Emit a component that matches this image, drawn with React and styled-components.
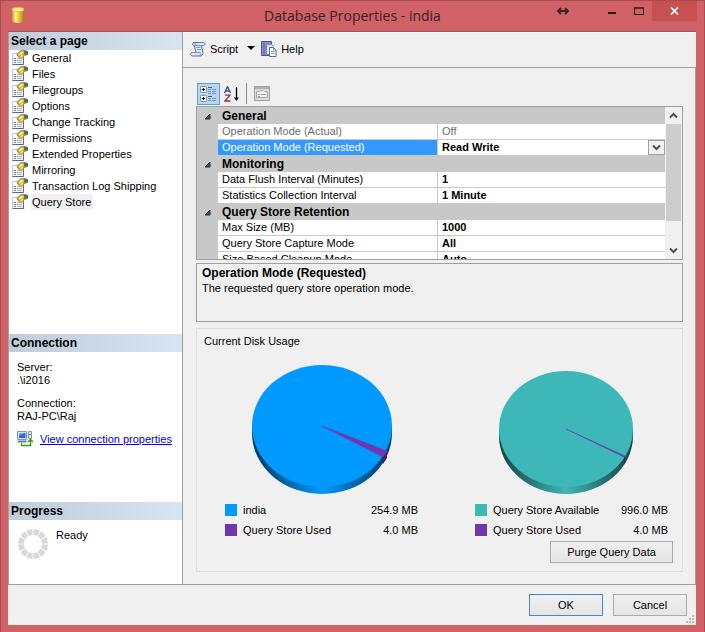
import React, { useState } from "react";
import styled, { createGlobalStyle } from "styled-components";

const GlobalStyle = createGlobalStyle`
    * {
        box-sizing: border-box;
    }

    body {
        margin: 0;
        background-color: #fff;
        color: #000;
        font: 11px/14px "Liberation Sans", Arial, sans-serif;
    }

    button, select {
        font: inherit;
        color: inherit;
    }

    svg {
        display: block;
        flex: none;
    }
`;

const Window = styled.div`
    display: flex;
    flex-direction: column;
    min-height: 100vh;
    padding: 0 8px 7px 7px;
    background-color: #cf6167;
    border: 1px solid #a94c51;
`;

const TitleBar = styled.header`
    display: grid;
    grid-template-columns: 1fr auto 1fr;
    height: 30px;
    margin-right: -1px;
`;

const AppIcon = styled.div`
    padding: 5px 3px;
`;

const Title = styled.h1`
    margin: 0;
    font: 14px/30px "Open Sans", "Noto Sans", sans-serif;
    color: #3b2022;
`;

const WindowControls = styled.div`
    display: flex;
    justify-content: flex-end;
    align-items: flex-start;
`;

const WindowButton = styled.button`
    display: flex;
    justify-content: center;
    align-items: center;
    width: ${(props) => (props.$close ? "45px" : "27px")};
    height: 20px;
    padding: 0;
    margin-right: ${(props) => (props.$apart ? "22px" : "0")};
    border: none;
    background-color: ${(props) => (props.$close ? "#c75050" : "transparent")};
`;

const Body = styled.div`
    position: relative;
    display: flex;
    flex-direction: column;
    flex: 1;
    background-color: #f0f0f0;
    border: solid #a5555a;
    border-width: 1px 0 0;
`;

const Panes = styled.div`
    display: flex;
    flex: 1;
    border-bottom: 1px solid #a0a0a0;
`;

const Sidebar = styled.aside`
    display: flex;
    flex-direction: column;
    width: 175px;
    flex: none;
    background-color: #fff;
    border: solid #a0a0a0;
    border-width: 0 1px;
`;

const SideTitle = styled.h2`
    margin: 0;
    padding: 0 2px;
    font-size: 12px;
    line-height: 18px;
    background: linear-gradient(to right, #bfcddb, #d7e4f2);
`;

const PageSection = styled.nav`
    flex: 1;
`;

const PageList = styled.ul`
    margin: 0;
    padding: 0 3px;
    list-style: none;
`;

const PageButton = styled.button`
    display: flex;
    align-items: center;
    gap: 3px;
    height: 16px;
    padding: 0;
    border: none;
    background: none;

    span {
        padding: 0 2px 0 1px;
        line-height: 16px;
        background-color: ${(props) => (props.$selected ? "#f0f0f0" : "transparent")};
    }
`;

const ConnectionInfo = styled.div`
    height: 150px;
    padding: 9px 8px;
    line-height: 13px;
`;

const Info = styled.dl`
    margin: 0 0 10px;

    dd {
        margin: 0;
    }
`;

const ConnectionLink = styled.a`
    display: flex;
    align-items: center;
    gap: 7px;
    margin-top: -2px;
    color: #0000e0;
`;

const ProgressInfo = styled.div`
    display: flex;
    gap: 7px;
    height: 64px;
    padding: 8px;
`;

const Main = styled.main`
    display: flex;
    flex-direction: column;
    flex: 1;
    min-width: 0;
    border-top: 1px solid #fff;
`;

const Toolbar = styled.div`
    display: flex;
    align-items: center;
    height: 34px;
    padding: 0 7px 3px;
`;

const ToolButton = styled.button`
    display: flex;
    align-items: center;
    gap: 4px;
    padding: 0;
    margin-right: ${(props) => (props.$menu ? "6px" : "0")};
    border: none;
    background: none;

    span {
        margin-right: ${(props) => (props.$menu ? "5px" : "0")};
    }
`;

const Content = styled.div`
    display: flex;
    flex-direction: column;
    flex: 1;
    padding: 13px 12px 12px 13px;
    border: solid #a0a0a0;
    border-width: 1px 1px 0 0;
`;

const GridTools = styled.div`
    display: flex;
    align-items: center;
    height: 25px;
    padding-left: 1px;
`;

const GridTool = styled.button`
    display: flex;
    align-items: center;
    justify-content: center;
    width: 23px;
    height: 22px;
    padding: 0;
    border: 1px solid ${(props) => (props.$active ? "#5c9fdc" : "transparent")};
    background-color: ${(props) => (props.$active ? "#b5d7f5" : "transparent")};
`;

const Separator = styled.span`
    width: 1px;
    height: 21px;
    margin: 0 3px;
    background-color: #8c8c8c;
`;

const PropertyBox = styled.div`
    display: flex;
    height: 154px;
    border: 1px solid #a0a0a0;
    overflow: hidden;
`;

const TableArea = styled.div`
    flex: 1;
    height: 152px;
    padding-top: 1px;
    overflow: hidden;
    background-color: #c8c8c8;
`;

const Table = styled.table`
    width: 100%;
    table-layout: fixed;
    border-collapse: separate;
    border-spacing: 0;
`;

const Gutter = styled.td`
    padding: 0 0 0 7px;
    background-color: #c8c8c8;
`;

const Category = styled.th`
    height: 16px;
    padding: 0 4px;
    font-size: 12px;
    line-height: 16px;
    text-align: left;
`;

const Name = styled.th`
    height: 16px;
    padding: 0 4px;
    font-weight: normal;
    line-height: 15px;
    text-align: left;
    color: ${(props) => (props.$selected ? "#fff" : props.$disabled ? "#6d6d6d" : "#000")};
    background-color: ${(props) => (props.$selected ? "#3399ff" : "#fff")};
    border: solid #c8c8c8;
    border-width: 0 1px 1px 0;
`;

const Value = styled.td`
    position: relative;
    height: 16px;
    padding: 0 4px;
    font-weight: ${(props) => (props.$disabled ? "normal" : "bold")};
    line-height: 15px;
    color: ${(props) => (props.$disabled ? "#6d6d6d" : "#000")};
    background-color: #fff;
    border-bottom: 1px solid #c8c8c8;
`;

const Select = styled.select`
    display: block;
    width: 100%;
    height: 15px;
    padding: 0;
    border: none;
    outline: none;
    appearance: none;
    background: none;
`;

const SelectArrow = styled.span`
    position: absolute;
    top: 0;
    right: 0;
    display: flex;
    align-items: center;
    justify-content: center;
    width: 17px;
    height: 15px;
    border: 1px solid #a0a0a0;
    background-color: #f0f0f0;
    pointer-events: none;
`;

const Scrollbar = styled.div`
    display: flex;
    flex-direction: column;
    width: 17px;
    padding: 0 1px;
    background-color: #f0f0f0;
`;

const ScrollButton = styled.button`
    display: flex;
    align-items: center;
    justify-content: center;
    height: 17px;
    padding: 0;
    border: none;
    background: none;
`;

const ScrollTrack = styled.div`
    flex: 1;
`;

const ScrollThumb = styled.div`
    height: 82%;
    background-color: #cdcdcd;
`;

const Description = styled.section`
    height: 59px;
    margin: 3px 0 6px;
    padding: 2px 5px;
    border: 1px solid #a0a0a0;

    h3 {
        margin: 0;
        font-size: 12px;
        line-height: 15px;
    }

    p {
        margin: 0;
        line-height: 15px;
    }
`;

const UsageBox = styled.section`
    display: flex;
    flex-direction: column;
    flex: 1;
    padding-bottom: 8px;
    border: 1px solid #dcdcdc;

    h3 {
        margin: 5px 7px 0;
        font-size: 11px;
        font-weight: normal;
    }
`;

const Charts = styled.div`
    display: grid;
    grid-template-columns: 1fr 1fr;
    gap: 57px;
    flex: 1;
    padding: 0 14px 0 28px;
`;

const Chart = styled.div`
    display: flex;
    flex-direction: column;
    justify-content: space-between;
`;

const Legend = styled.ul`
    margin: 0;
    padding: 0;
    list-style: none;
`;

const LegendRow = styled.li`
    display: flex;
    align-items: center;
    gap: 6px;
    height: 20px;

    b {
        margin-left: auto;
        font-weight: normal;
    }
`;

const Swatch = styled.span`
    width: 12px;
    height: 12px;
    background-color: ${(props) => props.$color};
`;

const Button = styled.button`
    width: ${(props) => (props.$wide ? "123px" : "74px")};
    height: 22px;
    padding: 0;
    border: 1px solid ${(props) => (props.$primary ? "#3c8cdc" : "#acacac")};
    background: linear-gradient(#f0f0f0, #e5e5e5);
`;

const PurgeRow = styled.div`
    display: flex;
    justify-content: flex-end;
    padding: 1px 9px 0;
`;

const Footer = styled.footer`
    display: flex;
    justify-content: flex-end;
    gap: 10px;
    padding: 9px;
`;

const Grip = styled.div`
    position: absolute;
    right: 2px;
    bottom: 2px;
`;

const pages = [
    "General",
    "Files",
    "Filegroups",
    "Options",
    "Change Tracking",
    "Permissions",
    "Extended Properties",
    "Mirroring",
    "Transaction Log Shipping",
    "Query Store",
];

const properties = [
    { category: "General" },
    { name: "Operation Mode (Actual)", value: "Off", disabled: true },
    { name: "Operation Mode (Requested)", value: "Read Write", options: ["Off", "Read Only", "Read Write"] },
    { category: "Monitoring" },
    { name: "Data Flush Interval (Minutes)", value: "1" },
    { name: "Statistics Collection Interval", value: "1 Minute" },
    { category: "Query Store Retention" },
    { name: "Max Size (MB)", value: "1000" },
    { name: "Query Store Capture Mode", value: "All" },
    { name: "Size Based Cleanup Mode", value: "Auto" },
];

const charts = [
    {
        id: "database",
        cx: 97, cy: 78, rx: 70, ry: 61,
        color: "#0099ff", dark: "#003a66", mid: "#0065a8",
        slice: [[65, 25], [61, 31]],
        items: [["india", "254.9 MB", "#0099ff"], ["Query Store Used", "4.0 MB", "#7037ad"]],
    },
    {
        id: "store",
        cx: 91, cy: 81, rx: 67, ry: 58,
        color: "#3eb7b8", dark: "#174545", mid: "#297a7a",
        slice: [[59, 27], [58, 28]],
        items: [["Query Store Available", "996.0 MB", "#3eb7b8"], ["Query Store Used", "4.0 MB", "#7037ad"]],
    },
];

const DatabaseIcon = () => (
    <svg width="14" height="18" viewBox="0 0 14 18">
        <defs>
            <linearGradient id="gold">
                <stop offset="0" stopColor="#c79a1c" />
                <stop offset=".3" stopColor="#fff3a0" />
                <stop offset=".6" stopColor="#eec52e" />
                <stop offset="1" stopColor="#a87810" />
            </linearGradient>
        </defs>
        <path d="M1 3.5v11c0 3.3 12 3.3 12 0v-11z" fill="url(#gold)" />
        <ellipse cx="7" cy="3.5" rx="6" ry="2.3" fill="#fbeb9a" stroke="#d5a72a" strokeWidth=".7" />
    </svg>
);

const PageIcon = () => (
    <svg width="16" height="16" viewBox="0 0 16 16">
        <path d="M.5 3.5h11v11H.5z" fill="#fff" stroke="#c3c6d2" />
        <path d="M11.5 8v6.5H.5" fill="none" stroke="#5b6385" />
        <path d="M2 8.5h2M2 10.5h2M2 12.5h2" stroke="#5b78c8" />
        <path d="M5 8.5h3M5 10.5h5M5 12.5h5" stroke="#a5afd8" />
        <path d="M5 4.5L8 1l3-.5h2l2.5 1v3L12 5.500 11.500 7 9.500 9 8 7.500 6 6.500z" fill="#d9ad35" stroke="#7b6425" strokeWidth=".7" />
        <path d="M6.500 4.500L9 1.800l3 .2-3 3z" fill="#fff09a" />
        <path d="M8 6.500l2-2 1 1L9.500 8z" fill="#f3dc6c" />
        <path d="M12.500.5l3.500.7v3l-3 .8-1-1.500z" fill="#46734b" />
    </svg>
);

const ServerIcon = () => (
    <svg width="16" height="16" viewBox="0 0 16 16">
        <path d="M.5.500h9v8h-9z" fill="#d9e4f4" stroke="#8195b8" />
        <path d="M2 2h6.500v5H2z" fill="#2469d8" />
        <path d="M2 2h6L2 5z" fill="#65a7f3" />
        <path d="M1 10.500h8.500" stroke="#6a7890" strokeWidth="2" />
        <path d="M11.500.5h3v7h-3z" fill="#e9edf2" stroke="#8994a8" />
        <path d="M12 3.500h2" stroke="#6d7890" />
        <path d="M4.500 12v2.500h9V9M11 11l2.500-2.500L16 11" fill="none" stroke="#339b1e" strokeWidth="1.300" />
    </svg>
);

const ScriptIcon = () => (
    <svg width="16" height="16" viewBox="0 0 16 16">
        <path d="M4 1.500h9.500c2 0 2 3 0 3h-2l1.500 8-1.500 2.500H2c-2-1-1.500-3.500.5-3.500h3.500L4.500 5C2 4.500 2 2 4 1.500z" fill="#dbe6f6" stroke="#5d7299" />
        <path d="M4 1.800c2 .3 1.500 2.700 0 2.700h8M2.500 11.500h7.500c1.500 1 .5 3-1 3.500M6.500 6.500h4M7 8.500h4" fill="none" stroke="#7d92b8" />
    </svg>
);

const HelpIcon = () => (
    <svg width="16" height="16" viewBox="0 0 16 16">
        <path d="M.5.500h10v14H.5z" fill="#8b93c9" stroke="#4c5590" />
        <path d="M3 1v13" stroke="#555f9e" />
        <path d="M5.500 3.500h5l2 2v8h-7z" fill="#dce7f6" stroke="#7185ac" />
        <path d="M8.500 6.500h4l2.500 2.500v6.500H8.500z" fill="#fff" stroke="#526b98" />
        <path d="M12.500 6.500V9H15M10 10.500h3.500M10 12.500h3.500" fill="none" stroke="#7c94be" />
    </svg>
);

const CategorizedIcon = () => (
    <svg width="17" height="16" viewBox="0 0 17 16">
        <rect x=".5" y=".5" width="6" height="6" rx="1" fill="#fff" stroke="#7f8ba0" />
        <rect x=".5" y="9.500" width="6" height="6" rx="1" fill="#fff" stroke="#7f8ba0" />
        <path d="M2 3.500h3M3.500 2v3M2 12.500h3M3.500 11v3" stroke="#000" />
        <path d="M8 1.500h4M8 10.500h4" stroke="#35598f" />
        <path d="M8 3.500h3m1 0h4M8 5.500h3m1 0h4M8 7.500h3m1 0h4M8 12.500h3m1 0h4M8 14.500h3m1 0h4" stroke="#8592aa" />
    </svg>
);

const SortIcon = () => (
    <svg width="16" height="16" viewBox="0 0 16 16">
        <path d="M.5 7L3.500.500 6.500 7M1.500 5h4" fill="none" stroke="#3350a0" strokeWidth="1.300" />
        <path d="M1 9.200h5L1 15h5.500" fill="none" stroke="#a02c36" strokeWidth="1.300" />
        <path d="M12.500 1v12" stroke="#000" strokeWidth="1.300" />
        <path d="M10 11.500h5L12.500 15z" />
    </svg>
);

const PropertyPagesIcon = () => (
    <svg width="16" height="15" viewBox="0 0 16 15">
        <path d="M.5.500h15v14H.5z" fill="#dcdcdc" stroke="#a0a0a0" />
        <path d="M1 2h14" stroke="#b0b0b0" strokeWidth="2" />
        <path d="M2.500 5.500h3l1-1h3l1 1h3v6h-11z" fill="#eee" stroke="#a8a8a8" />
        <path d="M4 8.500h2M7 8.500h5M4 10.500h2" stroke="#a0a0a0" />
    </svg>
);

const Chevron = ({ up }) => (
    <svg width="9" height="7" viewBox="0 0 9 7">
        <path d={up ? "M1 5.500l3.500-3.500L8 5.500" : "M1 1.500L4.500 5 8 1.500"} fill="none" stroke="#505050" strokeWidth="2" />
    </svg>
);

const Spinner = () => (
    <svg width="32" height="32" viewBox="0 0 32 32">
        <circle cx="16" cy="16" r="12" fill="none" stroke="#d9d9d9" strokeWidth="6" pathLength="120" strokeDasharray="8.600 1.400" strokeDashoffset="-.7" />
    </svg>
);

const Pie = ({ id, cx, cy, rx, ry, color, dark, mid, slice }) => {
    const [a, b] = slice;
    const depth = 7;

    return (
        <svg width="100%" height="152" viewBox="0 0 193 152">
            <defs>
                <linearGradient id={id}>
                    <stop offset="0" stopColor={dark} />
                    <stop offset=".25" stopColor={mid} />
                    <stop offset=".5" stopColor={color} />
                    <stop offset=".75" stopColor={mid} />
                    <stop offset="1" stopColor={dark} />
                </linearGradient>
            </defs>
            <path
                d={`M${cx - rx} ${cy}v${depth}a${rx} ${ry} 0 0 0 ${rx * 2} 0v${-depth}z`}
                fill={`url(#${id})`}
            />
            <path d={`M${cx + a[0]} ${cy + a[1]}L${cx + b[0]} ${cy + b[1]}v${depth}l${a[0] - b[0]} ${a[1] - b[1]}z`} fill="#3d1f66" />
            <ellipse cx={cx} cy={cy} rx={rx} ry={ry} fill={color} />
            <path d={`M${cx} ${cy}l${a[0]} ${a[1]}L${cx + b[0]} ${cy + b[1]}z`} fill="#7037ad" stroke="#7037ad" strokeWidth=".5" />
        </svg>
    );
};

const PropertyRow = ({ item }) => {
    const [value, setValue] = useState(item.value);

    if (item.category) {
        return (
            <tr>
                <Gutter>
                    <svg width="7" height="7" viewBox="0 0 7 7">
                        <path d="M6 1v5H1z" fill="#555" stroke="#222" />
                    </svg>
                </Gutter>
                <Category colSpan="2">{item.category}</Category>
            </tr>
        );
    }

    return (
        <tr>
            <Gutter />
            <Name scope="row" $selected={!!item.options} $disabled={item.disabled}>{item.name}</Name>
            <Value $disabled={item.disabled}>
                {item.options ? (
                    <>
                        <Select aria-label={item.name} value={value} onChange={(e) => setValue(e.target.value)}>
                            {item.options.map((option) => (
                                <option key={option}>{option}</option>
                            ))}
                        </Select>
                        <SelectArrow><Chevron /></SelectArrow>
                    </>
                ) : value}
            </Value>
        </tr>
    );
};

const App = () => {
    const [page, setPage] = useState("Query Store");

    return (
        <>
            <GlobalStyle />
            <Window>
                <TitleBar>
                    <AppIcon><DatabaseIcon /></AppIcon>
                    <Title>Database Properties - india</Title>
                    <WindowControls>
                        <WindowButton $apart aria-label="Resize">
                            <svg width="12" height="8" viewBox="0 0 12 8">
                                <path d="M2 4h8M4 1L1 4l3 3M8 1l3 3-3 3" fill="none" stroke="#3b2022" strokeWidth="1.800" />
                            </svg>
                        </WindowButton>
                        <WindowButton aria-label="Minimize">
                            <svg width="10" height="8" viewBox="0 0 10 8"><path d="M1 6h8" stroke="#2b1618" strokeWidth="2" /></svg>
                        </WindowButton>
                        <WindowButton aria-label="Maximize">
                            <svg width="10" height="8" viewBox="0 0 10 8"><path d="M.5 1h9v6.500h-9zM0 1h10" fill="none" stroke="#2b1618" /></svg>
                        </WindowButton>
                        <WindowButton $close aria-label="Close">
                            <svg width="9" height="8" viewBox="0 0 9 8"><path d="M1 .500l7 7M8 .500l-7 7" stroke="#fff" strokeWidth="1.700" /></svg>
                        </WindowButton>
                    </WindowControls>
                </TitleBar>

                <Body>
                    <Panes>
                        <Sidebar>
                            <PageSection>
                                <SideTitle>Select a page</SideTitle>
                                <PageList>
                                    {pages.map((item) => (
                                        <li key={item}>
                                            <PageButton $selected={item === page} onClick={() => setPage(item)}>
                                                <PageIcon />
                                                <span>{item}</span>
                                            </PageButton>
                                        </li>
                                    ))}
                                </PageList>
                            </PageSection>

                            <SideTitle>Connection</SideTitle>
                            <ConnectionInfo>
                                <Info>
                                    <dt>Server:</dt>
                                    <dd>.\i2016</dd>
                                </Info>
                                <Info>
                                    <dt>Connection:</dt>
                                    <dd>RAJ-PC\Raj</dd>
                                </Info>
                                <ConnectionLink href="#connection">
                                    <ServerIcon />
                                    View connection properties
                                </ConnectionLink>
                            </ConnectionInfo>

                            <SideTitle>Progress</SideTitle>
                            <ProgressInfo>
                                <Spinner />
                                <span>Ready</span>
                            </ProgressInfo>
                        </Sidebar>

                        <Main>
                            <Toolbar>
                                <ToolButton $menu>
                                    <ScriptIcon />
                                    <span>Script</span>
                                    <svg width="8" height="5" viewBox="0 0 8 5"><path d="M0 0h8L4 4z" /></svg>
                                </ToolButton>
                                <ToolButton>
                                    <HelpIcon />
                                    <span>Help</span>
                                </ToolButton>
                            </Toolbar>

                            <Content>
                                <GridTools>
                                    <GridTool $active aria-label="Categorized"><CategorizedIcon /></GridTool>
                                    <GridTool aria-label="Alphabetical"><SortIcon /></GridTool>
                                    <Separator />
                                    <GridTool disabled aria-label="Property Pages"><PropertyPagesIcon /></GridTool>
                                </GridTools>

                                <PropertyBox>
                                    <TableArea>
                                        <Table>
                                            <colgroup>
                                                <col width="21" />
                                                <col width="220" />
                                                <col />
                                            </colgroup>
                                            <tbody>
                                                {properties.map((item) => (
                                                    <PropertyRow key={item.category || item.name} item={item} />
                                                ))}
                                            </tbody>
                                        </Table>
                                    </TableArea>
                                    <Scrollbar>
                                        <ScrollButton aria-label="Scroll up"><Chevron up /></ScrollButton>
                                        <ScrollTrack><ScrollThumb /></ScrollTrack>
                                        <ScrollButton aria-label="Scroll down"><Chevron /></ScrollButton>
                                    </Scrollbar>
                                </PropertyBox>

                                <Description>
                                    <h3>Operation Mode (Requested)</h3>
                                    <p>The requested query store operation mode.</p>
                                </Description>

                                <UsageBox>
                                    <h3>Current Disk Usage</h3>
                                    <Charts>
                                        {charts.map((chart) => (
                                            <Chart key={chart.id}>
                                                <Pie {...chart} />
                                                <Legend>
                                                    {chart.items.map(([label, size, color]) => (
                                                        <LegendRow key={label}>
                                                            <Swatch $color={color} />
                                                            <span>{label}</span>
                                                            <b>{size}</b>
                                                        </LegendRow>
                                                    ))}
                                                </Legend>
                                            </Chart>
                                        ))}
                                    </Charts>
                                    <PurgeRow>
                                        <Button $wide>Purge Query Data</Button>
                                    </PurgeRow>
                                </UsageBox>
                            </Content>
                        </Main>
                    </Panes>

                    <Footer>
                        <Button $primary>OK</Button>
                        <Button>Cancel</Button>
                    </Footer>
                    <Grip>
                        <svg width="8" height="8" viewBox="0 0 8 8">
                            <path d="M6 0h2v2H6zM3 3h2v2H3zM6 3h2v2H6zM0 6h2v2H0zM3 6h2v2H3zM6 6h2v2H6z" fill="#bcbcbc" />
                        </svg>
                    </Grip>
                </Body>
            </Window>
        </>
    );
};

export default App;
